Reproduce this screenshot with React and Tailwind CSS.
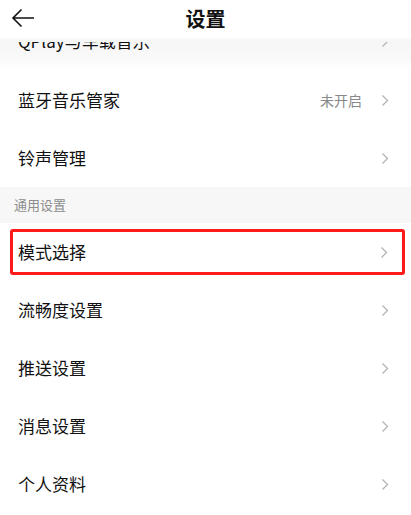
import React from "react";

const font = { fontFamily: '"Noto Sans CJK SC", "Noto Sans", sans-serif' };

function Chevron() {
  return (
    <svg width="8" height="13" viewBox="0 0 8 13" className="shrink-0">
      <path d="M1.5 1.5 L6.5 6.5 L1.5 11.5" fill="none" stroke="#b3b3b3" strokeWidth="1.3" />
    </svg>
  );
}

function Row({ label, value }) {
  return (
    <div className="flex h-[58px] items-center justify-between pl-[18px] pr-[22px]">
      <span className="text-[17px] text-[#111]">{label}</span>
      <div className="flex items-center gap-[19px]">
        {value && <span className="text-[14px] text-[#888]">{value}</span>}
        <Chevron />
      </div>
    </div>
  );
}

function App() {
  return (
    <div className="h-[515px] w-[411px] overflow-hidden bg-white" style={font}>
      {/* Header */}
      <div className="relative flex h-[42px] flex-col bg-white">
        <div className="flex h-[38px] items-center justify-center">
          <svg
            width="26"
            height="22"
            viewBox="0 0 26 22"
            className="absolute left-[10px] top-[7px]"
          >
            <path d="M24 11 H3 M11.5 2.5 L3 11 L11.5 19.5" fill="none" stroke="#111" strokeWidth="1.6" />
          </svg>
          <span className="text-[20px] font-bold text-[#111]">设置</span>
        </div>
        <div className="h-[4px] bg-gradient-to-b from-[#fafafa] to-[#f6f6f6]" />
      </div>

      {/* clipped row under the header */}
      <div className="h-[29px] overflow-hidden bg-gradient-to-b from-[#f6f6f6] via-[#f9f9f9] to-white">
        <div className="-mt-[30px]">
          <Row label="QPlay与车载音乐" />
        </div>
      </div>

      <Row label="蓝牙音乐管家" value="未开启" />
      <Row label="铃声管理" />

      <div className="flex h-[36px] items-center bg-[#f7f7f7] pl-[14px]">
        <span className="text-[13px] text-[#8c8c8c]">通用设置</span>
      </div>

      <div className="pl-[10px] pr-[6px] py-[6px]">
        <div className="flex h-[46px] items-center justify-between rounded-[3px] border-[3px] border-[#ff1a1a] pl-[5px] pr-[14px]">
          <span className="text-[17px] text-[#111]">模式选择</span>
          <Chevron />
        </div>
      </div>

      <Row label="流畅度设置" />
      <Row label="推送设置" />
      <Row label="消息设置" />
      <Row label="个人资料" />
    </div>
  );
}

export default App;
